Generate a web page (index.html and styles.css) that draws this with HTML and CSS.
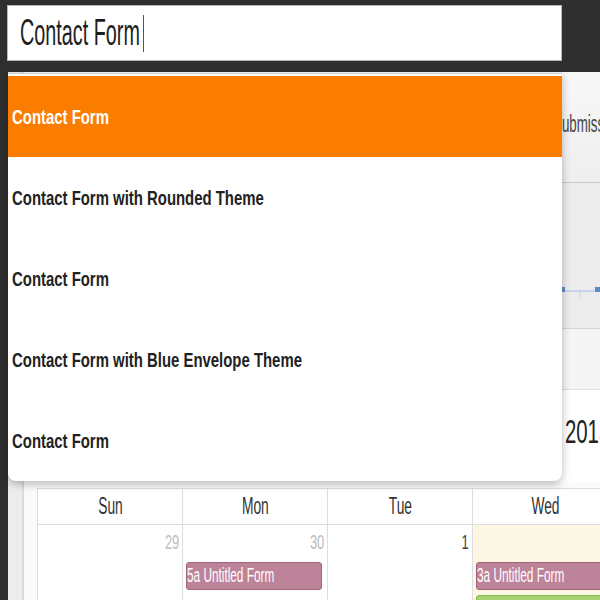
FILE: index.html
```html
<!DOCTYPE html>
<html lang="en">
<head>
    <meta charset="UTF-8">
    <title>Forms</title>
    <link rel="stylesheet" href="styles.css">
</head>
<body>
    <div class="topbar">
        <div class="search">
            <span class="squeeze search-text">Contact Form</span><span class="caret"></span>
        </div>
    </div>

    <div class="page">
        <div class="side"></div>
        <div class="main">
            <div class="stats-head"><span class="squeeze tab">Submissions</span></div>
            <div class="chart">
                <svg class="chart-line" width="600" height="20" viewBox="0 0 600 20">
                    <line x1="0" y1="6" x2="600" y2="6" stroke="#b9cfe8" stroke-width="1.5"/>
                    <line x1="556" y1="6" x2="556" y2="14" stroke="#c4d6ea" stroke-width="1"/>
                    <rect x="537" y="2" width="4" height="5" fill="#5b8bc7"/>
                    <rect x="571" y="2" width="6" height="5" fill="#5b8bc7"/>
                </svg>
            </div>
            <div class="strip"></div>
            <div class="cal-title"><span class="squeeze month">June 2013</span></div>
            <div class="cal-wrap">
                <table class="calendar">
                    <tr>
                        <th><span class="squeeze">Sun</span></th>
                        <th><span class="squeeze">Mon</span></th>
                        <th><span class="squeeze">Tue</span></th>
                        <th><span class="squeeze">Wed</span></th>
                    </tr>
                    <tr>
                        <td><div class="day other"><span class="squeeze">29</span></div></td>
                        <td>
                            <div class="day other"><span class="squeeze">30</span></div>
                            <div class="event"><span class="squeeze">5a Untitled Form</span></div>
                        </td>
                        <td><div class="day"><span class="squeeze">1</span></div></td>
                        <td class="today">
                            <div class="day"><span class="squeeze">2</span></div>
                            <div class="event"><span class="squeeze">3a Untitled Form</span></div>
                            <div class="event green"></div>
                        </td>
                    </tr>
                </table>
            </div>
        </div>

        <ul class="suggest">
            <li class="active"><span class="squeeze">Contact Form</span></li>
            <li><span class="squeeze">Contact Form with Rounded Theme</span></li>
            <li><span class="squeeze">Contact Form</span></li>
            <li><span class="squeeze">Contact Form with Blue Envelope Theme</span></li>
            <li><span class="squeeze">Contact Form</span></li>
        </ul>
    </div>
</body>
</html>
```

FILE: styles.css
```css
html, body {
    margin: 0;
    height: 600px;
    overflow: hidden;
}

body {
    background-color: #2f2f2f;
    font-family: "Liberation Sans", Arial, sans-serif;
}

/* narrow type: the shot is squeezed sideways */
.squeeze {
    display: inline-block;
    white-space: nowrap;
    transform-origin: left center;
}

.topbar {
    height: 72px;
    padding: 5px 0 0 7px;
    box-sizing: border-box;
}

.search {
    width: 555px;
    height: 56px;
    box-sizing: border-box;
    background-color: #fff;
    border: 1px solid #b5b5b5;
    display: flex;
    align-items: center;
    padding-left: 12px;
}

.search-text {
    font-size: 36px;
    color: #1e1e1e;
    transform: scaleX(0.55);
    width: 123px;
}

.caret {
    width: 1px;
    height: 37px;
    background-color: #555;
}

.page {
    position: relative;
    display: flex;
    margin-left: 8px;
    height: 528px;
    background-color: #f7f7f7;
}

.side {
    width: 14px;
    background-color: #ececec;
    border-right: 2px solid #d9d9d9;
}

.main {
    flex: 1;
    overflow: hidden;
}

.stats-head {
    height: 111px;
    border-bottom: 1px solid #c8c8c8;
    background: linear-gradient(#f8f8f8, #eeeeee);
    padding: 39px 0 0 529px;
    box-sizing: border-box;
}

.tab {
    font-size: 23px;
    color: #444;
    transform: scaleX(0.58);
}

.chart {
    height: 146px;
    border-bottom: 1px solid #d4d4d4;
    background-color: #ececec;
    box-sizing: border-box;
    padding-top: 102px;
}

.chart-line {
    display: block;
}

.strip {
    height: 61px;
    border-bottom: 1px solid #dcdcdc;
    background-color: #f5f5f5;
    box-sizing: border-box;
}

.cal-title {
    height: 93px;
    background-color: #fff;
    padding: 22px 0 0 491px;
    box-sizing: border-box;
}

.month {
    font-size: 34px;
    color: #222;
    transform: scaleX(0.6);
}

.cal-wrap {
    background-color: #fafafa;
    padding: 5px 0 0 13px;
}

.calendar {
    border-collapse: collapse;
    table-layout: fixed;
    width: 580px;
    background-color: #fff;
}

.calendar th,
.calendar td {
    border: 1px solid #dddddd;
    width: 144px;
    padding: 0;
}

.calendar th {
    height: 35px;
    font-weight: normal;
    font-size: 23px;
    color: #333;
}

.calendar th .squeeze {
    transform: scaleX(0.6);
    transform-origin: center;
}

.calendar td {
    vertical-align: top;
    height: 90px;
}

.calendar td.today {
    background-color: #fcf6e4;
}

.day {
    text-align: right;
    padding: 5px 3px 0 0;
    height: 32px;
    box-sizing: border-box;
    font-size: 21px;
    color: #444;
}

.day .squeeze {
    transform: scaleX(0.62);
    transform-origin: right center;
}

.day.other {
    color: #bdbdbd;
}

.event {
    margin: 5px 5px 0 3px;
    height: 28px;
    box-sizing: border-box;
    background-color: #bd8399;
    border: 1px solid #a1667d;
    border-radius: 3px;
    color: #fff;
    font-size: 20px;
    line-height: 25px;
    padding-left: 0;
}

.event .squeeze {
    transform: scaleX(0.59);
}

.event.green {
    background-color: #a6d16e;
    border-color: #86b94c;
}

.suggest {
    position: absolute;
    left: 0;
    top: 1px;
    width: 554px;
    margin: 0;
    padding: 2px 0 0;
    list-style: none;
    background-color: #fff;
    border-top: 1px solid #d0d0d0;
    border-radius: 0 0 8px 8px;
    box-shadow: 0 3px 8px rgba(0, 0, 0, 0.28);
}

.suggest li {
    height: 81px;
    display: flex;
    align-items: center;
    padding-left: 4px;
    font-size: 21px;
    font-weight: bold;
    color: #222;
}

.suggest li .squeeze {
    transform: scaleX(0.71);
}

.suggest li.active {
    background-color: #fb7d00;
    color: #fff;
}
```
